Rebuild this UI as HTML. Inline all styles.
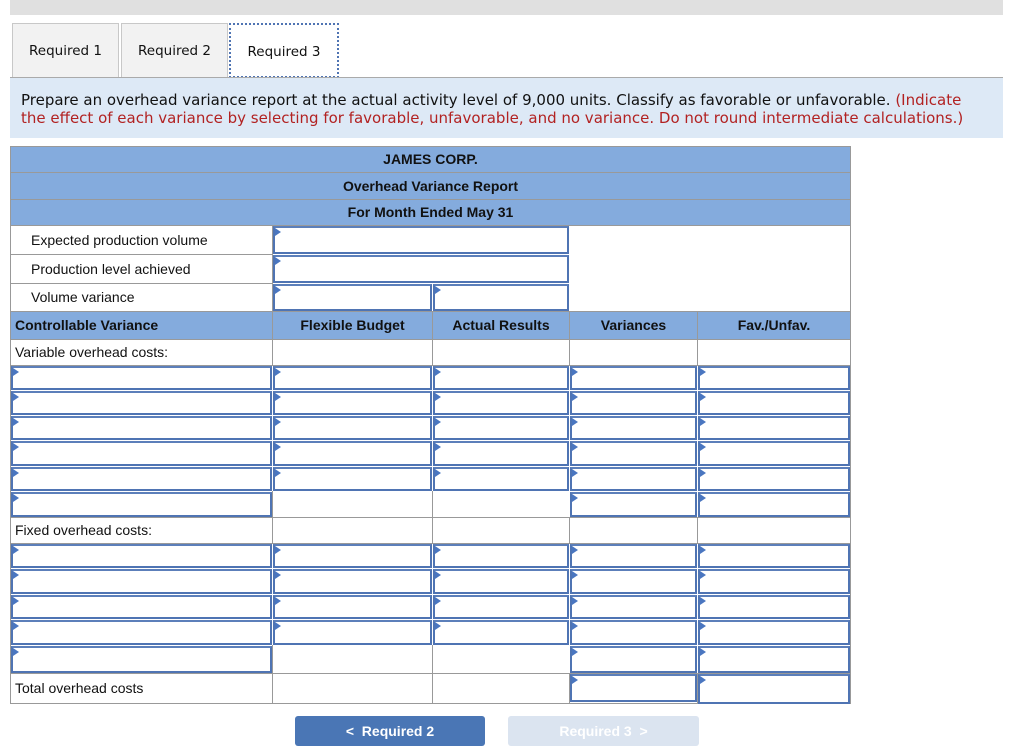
<!DOCTYPE html>
<html><head><meta charset="utf-8"><style>
body{margin:0;width:1024px;height:732px;overflow:hidden;background:#fff;position:relative;font-family:"Liberation Sans",Arial,sans-serif}
.a{position:absolute;box-sizing:border-box}
.c{position:absolute;box-sizing:border-box;border:1px solid #999;background:#fff;font-size:14px;color:#111}
.h{background:#84abdd;font-weight:bold;font-size:14px;text-align:center;color:#111}
.in{position:absolute;box-sizing:border-box;border:2px solid #4f74b3;border-top-color:#5c7fba;background:#fff}
.in:before{content:"";position:absolute;left:0;top:0;border-left:6px solid #4a76c0;border-top:4px solid transparent;border-bottom:4px solid transparent}
.tab{position:absolute;top:23px;height:55px;box-sizing:border-box;border:1px solid #c8c8c8;background:#f2f2f2;font-family:"DejaVu Sans",sans-serif;font-size:13.5px;line-height:55px;text-align:center;color:#111}
</style></head><body>
<div class="a" style="left:10px;top:0;width:993px;height:15px;background:#e0e0e0"></div>
<div class="tab" style="left:12px;width:107px">Required 1</div>
<div class="tab" style="left:121px;width:107px">Required 2</div>
<div class="tab" style="left:229px;width:110px;background:#fff;border:2px dotted #4f74b3">Required 3</div>
<div class="a" style="left:10px;top:77px;width:993px;height:61px;background:#dde9f6;border-top:1px solid #aaa;font-family:'DejaVu Sans',sans-serif;font-size:15px;line-height:18px;padding:13px 20px 0 11px;color:#111">Prepare an overhead variance report at the actual activity level of 9,000 units. Classify as favorable or unfavorable. <span style="color:#b22222">(Indicate the effect of each variance by selecting for favorable, unfavorable, and no variance. Do not round intermediate calculations.)</span></div>

<div class="c h" style="left:10px;top:146px;width:841px;height:27px;line-height:25px">JAMES CORP.</div>
<div class="c h" style="left:10px;top:172px;width:841px;height:28px;line-height:26px">Overhead Variance Report</div>
<div class="c h" style="left:10px;top:199px;width:841px;height:27px;line-height:25px">For Month Ended May 31</div>

<div class="c" style="left:10px;top:225px;width:263px;height:30px;line-height:28px;padding-left:20px">Expected production volume</div>
<div class="c" style="left:10px;top:254px;width:263px;height:30px;line-height:28px;padding-left:20px">Production level achieved</div>
<div class="c" style="left:10px;top:283px;width:263px;height:29px;line-height:27px;padding-left:20px">Volume variance</div>
<div class="c" style="left:272px;top:225px;width:579px;height:87px"></div>
<div class="in" style="left:273px;top:226px;width:296px;height:28px"></div>
<div class="in" style="left:273px;top:255px;width:296px;height:28px"></div>
<div class="in" style="left:273px;top:284px;width:159px;height:27px"></div>
<div class="in" style="left:433px;top:284px;width:136px;height:27px"></div>

<div class="c h" style="left:10px;top:311px;width:263px;height:29px;line-height:27px;text-align:left;padding-left:4px">Controllable Variance</div>
<div class="c h" style="left:272px;top:311px;width:161px;height:29px;line-height:27px">Flexible Budget</div>
<div class="c h" style="left:432px;top:311px;width:138px;height:29px;line-height:27px">Actual Results</div>
<div class="c h" style="left:569px;top:311px;width:129px;height:29px;line-height:27px">Variances</div>
<div class="c h" style="left:697px;top:311px;width:154px;height:29px;line-height:27px">Fav./Unfav.</div>

<div class="c" style="left:10px;top:339px;width:263px;height:27px;line-height:25px;padding-left:4px">Variable overhead costs:</div>
<div class="c" style="left:272px;top:339px;width:161px;height:27px"></div>
<div class="c" style="left:432px;top:339px;width:138px;height:27px"></div>
<div class="c" style="left:569px;top:339px;width:129px;height:27px"></div>
<div class="c" style="left:697px;top:339px;width:154px;height:27px"></div>

<div class="c" style="left:10px;top:365px;width:841px;height:153px"></div>
<div class="c" style="left:10px;top:517px;width:263px;height:27px;line-height:25px;padding-left:4px">Fixed overhead costs:</div>
<div class="c" style="left:272px;top:517px;width:161px;height:27px"></div>
<div class="c" style="left:432px;top:517px;width:138px;height:27px"></div>
<div class="c" style="left:569px;top:517px;width:129px;height:27px"></div>
<div class="c" style="left:697px;top:517px;width:154px;height:27px"></div>
<div class="c" style="left:10px;top:543px;width:841px;height:131px"></div>
<div class="c" style="left:10px;top:673px;width:263px;height:31px;line-height:29px;padding-left:4px">Total overhead costs</div>
<div class="c" style="left:272px;top:673px;width:161px;height:31px"></div>
<div class="c" style="left:432px;top:673px;width:138px;height:31px"></div>
<div class="c" style="left:569px;top:673px;width:129px;height:31px"></div>
<div class="c" style="left:697px;top:673px;width:154px;height:31px"></div>
<div class="a" style="left:272px;top:491px;width:1px;height:26px;background:#999"></div>
<div class="a" style="left:432px;top:491px;width:1px;height:26px;background:#999"></div>
<div class="a" style="left:272px;top:645px;width:1px;height:28px;background:#999"></div>
<div class="a" style="left:432px;top:645px;width:1px;height:28px;background:#999"></div>

<div class="in" style="left:11px;top:366px;width:261px;height:24px"></div><div class="in" style="left:273px;top:366px;width:159px;height:24px"></div><div class="in" style="left:433px;top:366px;width:136px;height:24px"></div><div class="in" style="left:570px;top:366px;width:127px;height:24px"></div><div class="in" style="left:698px;top:366px;width:152px;height:24px"></div>
<div class="in" style="left:11px;top:391px;width:261px;height:24px"></div><div class="in" style="left:273px;top:391px;width:159px;height:24px"></div><div class="in" style="left:433px;top:391px;width:136px;height:24px"></div><div class="in" style="left:570px;top:391px;width:127px;height:24px"></div><div class="in" style="left:698px;top:391px;width:152px;height:24px"></div>
<div class="in" style="left:11px;top:416px;width:261px;height:24px"></div><div class="in" style="left:273px;top:416px;width:159px;height:24px"></div><div class="in" style="left:433px;top:416px;width:136px;height:24px"></div><div class="in" style="left:570px;top:416px;width:127px;height:24px"></div><div class="in" style="left:698px;top:416px;width:152px;height:24px"></div>
<div class="in" style="left:11px;top:441px;width:261px;height:25px"></div><div class="in" style="left:273px;top:441px;width:159px;height:25px"></div><div class="in" style="left:433px;top:441px;width:136px;height:25px"></div><div class="in" style="left:570px;top:441px;width:127px;height:25px"></div><div class="in" style="left:698px;top:441px;width:152px;height:25px"></div>
<div class="in" style="left:11px;top:467px;width:261px;height:24px"></div><div class="in" style="left:273px;top:467px;width:159px;height:24px"></div><div class="in" style="left:433px;top:467px;width:136px;height:24px"></div><div class="in" style="left:570px;top:467px;width:127px;height:24px"></div><div class="in" style="left:698px;top:467px;width:152px;height:24px"></div>
<div class="in" style="left:11px;top:492px;width:261px;height:25px"></div><div class="in" style="left:570px;top:492px;width:127px;height:25px"></div><div class="in" style="left:698px;top:492px;width:152px;height:25px"></div>
<div class="in" style="left:11px;top:544px;width:261px;height:24px"></div><div class="in" style="left:273px;top:544px;width:159px;height:24px"></div><div class="in" style="left:433px;top:544px;width:136px;height:24px"></div><div class="in" style="left:570px;top:544px;width:127px;height:24px"></div><div class="in" style="left:698px;top:544px;width:152px;height:24px"></div>
<div class="in" style="left:11px;top:569px;width:261px;height:25px"></div><div class="in" style="left:273px;top:569px;width:159px;height:25px"></div><div class="in" style="left:433px;top:569px;width:136px;height:25px"></div><div class="in" style="left:570px;top:569px;width:127px;height:25px"></div><div class="in" style="left:698px;top:569px;width:152px;height:25px"></div>
<div class="in" style="left:11px;top:595px;width:261px;height:24px"></div><div class="in" style="left:273px;top:595px;width:159px;height:24px"></div><div class="in" style="left:433px;top:595px;width:136px;height:24px"></div><div class="in" style="left:570px;top:595px;width:127px;height:24px"></div><div class="in" style="left:698px;top:595px;width:152px;height:24px"></div>
<div class="in" style="left:11px;top:620px;width:261px;height:25px"></div><div class="in" style="left:273px;top:620px;width:159px;height:25px"></div><div class="in" style="left:433px;top:620px;width:136px;height:25px"></div><div class="in" style="left:570px;top:620px;width:127px;height:25px"></div><div class="in" style="left:698px;top:620px;width:152px;height:25px"></div>
<div class="in" style="left:11px;top:646px;width:261px;height:27px"></div><div class="in" style="left:570px;top:646px;width:127px;height:27px"></div><div class="in" style="left:698px;top:646px;width:152px;height:27px"></div>
<div class="in" style="left:570px;top:674px;width:127px;height:28px"></div><div class="in" style="left:698px;top:674px;width:152px;height:30px"></div>

<div class="a" style="left:295px;top:716px;width:190px;height:30px;background:#4a76b5;border-radius:3px;color:#fff;font-weight:bold;font-size:14px;text-align:center;line-height:30px">&lt; &nbsp;Required 2</div>
<div class="a" style="left:508px;top:716px;width:191px;height:30px;background:#dbe4f0;border-radius:3px;color:#fff;font-weight:bold;font-size:14px;text-align:center;line-height:30px">Required 3 &nbsp;&gt;</div>
</body></html>
